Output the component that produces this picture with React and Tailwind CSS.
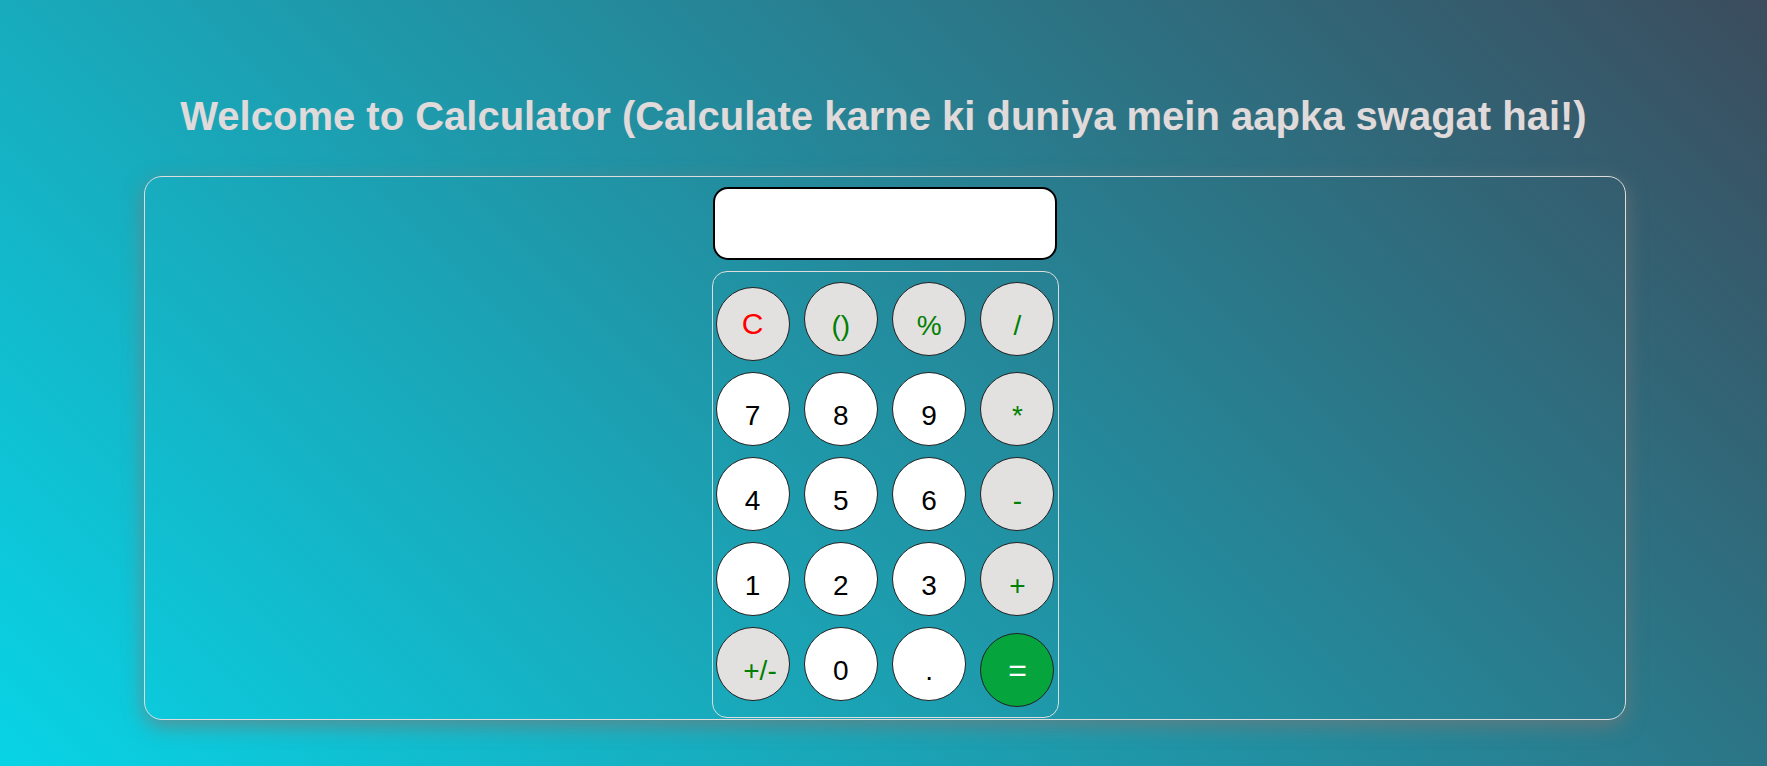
import React, { useState } from 'react'

const rows = [
  [
    { label: 'C', kind: 'clear' },
    { label: '()', kind: 'op' },
    { label: '%', kind: 'op' },
    { label: '/', kind: 'op' },
  ],
  [
    { label: '7', kind: 'num' },
    { label: '8', kind: 'num' },
    { label: '9', kind: 'num' },
    { label: '*', kind: 'op' },
  ],
  [
    { label: '4', kind: 'num' },
    { label: '5', kind: 'num' },
    { label: '6', kind: 'num' },
    { label: '-', kind: 'op' },
  ],
  [
    { label: '1', kind: 'num' },
    { label: '2', kind: 'num' },
    { label: '3', kind: 'num' },
    { label: '+', kind: 'op' },
  ],
  [
    { label: '+/-', kind: 'sign' },
    { label: '0', kind: 'num' },
    { label: '.', kind: 'num' },
    { label: '=', kind: 'equals' },
  ],
]

const styles = {
  num: 'bg-white text-black text-[28px] pt-[13px]',
  op: 'bg-[#e3e0e0] text-[#008000] text-[28px] pt-[13px]',
  sign: 'bg-[#e3e0e0] text-[#008000] text-[28px] pt-[13px] pl-[15px]',
  clear: 'bg-[#e3e0e0] text-[#ff0000] text-[30px] mt-[5px]',
  equals: 'bg-[#05a43d] text-white text-[32px] mt-[6px]',
}

function Key({ label, kind, onPress }) {
  return (
    <button
      onClick={() => onPress(label)}
      className={`w-[74px] h-[74px] shrink-0 rounded-full border border-[#222] flex items-center justify-center leading-none ${styles[kind]}`}
    >
      <span className="leading-[32px]">{label}</span>
    </button>
  )
}

export default function App() {
  const [value, setValue] = useState('')

  const press = (label) => {
    if (label === 'C') return setValue('')
    if (label === '=') {
      try {
        // eslint-disable-next-line no-new-func
        setValue(String(Function(`return (${value})`)()))
      } catch {
        setValue('Error')
      }
      return
    }
    setValue(value + label)
  }

  return (
    <div className="min-h-screen bg-[linear-gradient(45deg,#08d4e6,#3b4c5d)] pt-[93px] font-['Liberation_Sans',Arial,sans-serif]">
      <h1 className="text-center text-[40px] leading-[46px] font-bold text-[#e0dada] mb-[37px]">
        Welcome to Calculator (Calculate karne ki duniya mein aapka swagat hai!)
      </h1>

      <div className="ml-[144px] w-[1482px] h-[544px] border border-[#ddd] rounded-[18px] shadow-[0_6px_20px_rgba(120,120,120,0.7)] flex flex-col items-center pt-[10px]">
        {/* Display */}
        <input
          readOnly
          value={value}
          className="w-[344px] h-[73px] bg-white border-2 border-black rounded-[15px] px-3 text-right text-[28px] outline-none"
        />

        {/* Keypad */}
        <div className="mt-[11px] w-[347px] border border-[#ddd] rounded-[15px] px-[3px] py-[10px] flex flex-col gap-[11px]">
          {rows.map((row, i) => (
            <div key={i} className="flex items-start justify-between">
              {row.map((k) => (
                <Key key={k.label} {...k} onPress={press} />
              ))}
            </div>
          ))}
        </div>
      </div>
    </div>
  )
}
